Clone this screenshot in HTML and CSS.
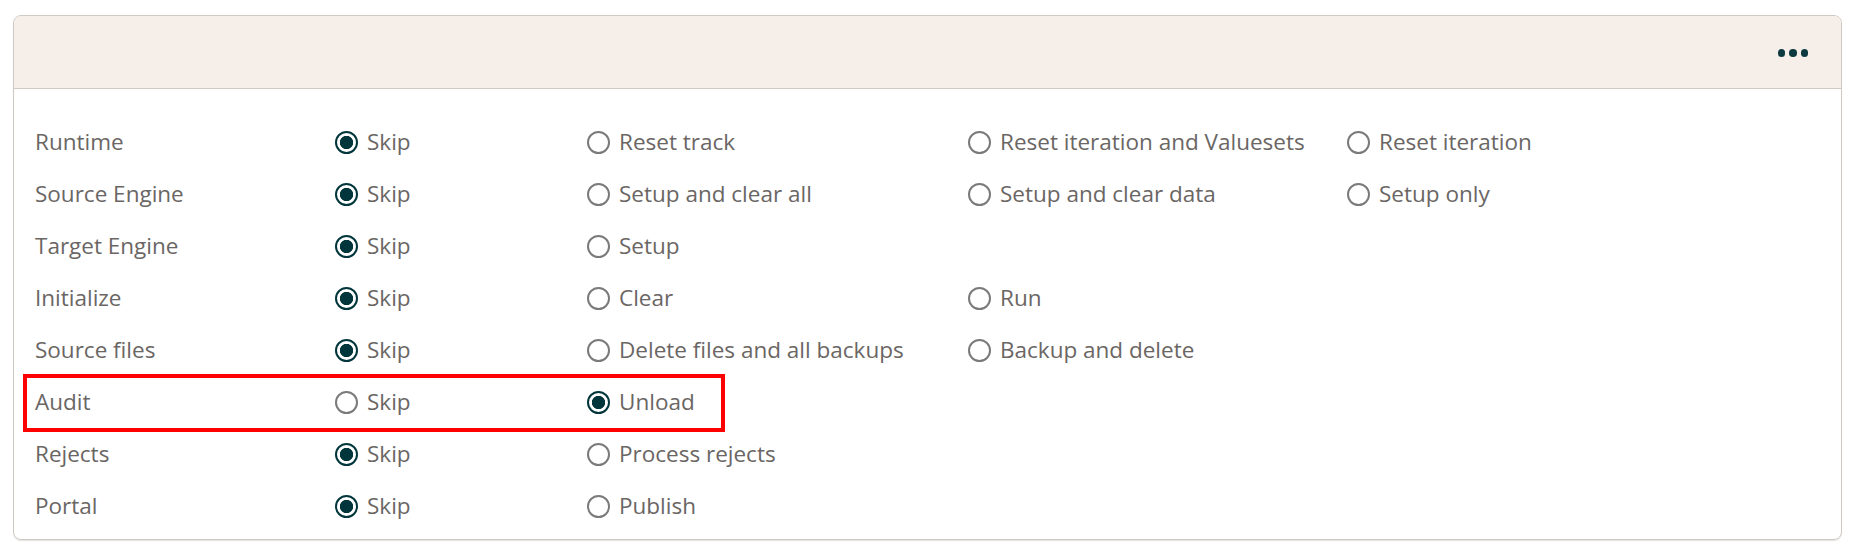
FILE: index.html
```html
<!DOCTYPE html>
<html lang="en">
<head>
<meta charset="utf-8">
<title>Process options</title>
<link rel="stylesheet" href="styles.css">
</head>
<body>
<div class="page">
  <section class="card">
    <header class="card-header">
      <button class="more" aria-label="More options">
        <span class="dot"></span><span class="dot"></span><span class="dot"></span>
      </button>
    </header>
    <div class="card-body">
      <div class="row">
        <span class="name">Runtime</span>
        <label class="opt"><input type="radio" name="runtime" checked><span>Skip</span></label>
        <label class="opt"><input type="radio" name="runtime"><span>Reset track</span></label>
        <label class="opt"><input type="radio" name="runtime"><span>Reset iteration and Valuesets</span></label>
        <label class="opt"><input type="radio" name="runtime"><span>Reset iteration</span></label>
      </div>
      <div class="row">
        <span class="name">Source Engine</span>
        <label class="opt"><input type="radio" name="source" checked><span>Skip</span></label>
        <label class="opt"><input type="radio" name="source"><span>Setup and clear all</span></label>
        <label class="opt"><input type="radio" name="source"><span>Setup and clear data</span></label>
        <label class="opt"><input type="radio" name="source"><span>Setup only</span></label>
      </div>
      <div class="row">
        <span class="name">Target Engine</span>
        <label class="opt"><input type="radio" name="target" checked><span>Skip</span></label>
        <label class="opt"><input type="radio" name="target"><span>Setup</span></label>
      </div>
      <div class="row">
        <span class="name">Initialize</span>
        <label class="opt"><input type="radio" name="init" checked><span>Skip</span></label>
        <label class="opt"><input type="radio" name="init"><span>Clear</span></label>
        <label class="opt"><input type="radio" name="init"><span>Run</span></label>
      </div>
      <div class="row">
        <span class="name">Source files</span>
        <label class="opt"><input type="radio" name="files" checked><span>Skip</span></label>
        <label class="opt"><input type="radio" name="files"><span>Delete files and all backups</span></label>
        <label class="opt"><input type="radio" name="files"><span>Backup and delete</span></label>
      </div>
      <div class="row row-highlight">
        <span class="name">Audit</span>
        <label class="opt"><input type="radio" name="audit"><span>Skip</span></label>
        <label class="opt"><input type="radio" name="audit" checked><span>Unload</span></label>
      </div>
      <div class="row">
        <span class="name">Rejects</span>
        <label class="opt"><input type="radio" name="rejects" checked><span>Skip</span></label>
        <label class="opt"><input type="radio" name="rejects"><span>Process rejects</span></label>
      </div>
      <div class="row">
        <span class="name">Portal</span>
        <label class="opt"><input type="radio" name="portal" checked><span>Skip</span></label>
        <label class="opt"><input type="radio" name="portal"><span>Publish</span></label>
      </div>
    </div>
  </section>
</div>
</body>
</html>
```
FILE: styles.css
```css
* { box-sizing: border-box; }

html, body {
  margin: 0;
  padding: 0;
  background: #ffffff;
}

body {
  font-family: "Open Sans", "Noto Sans", "Liberation Sans", sans-serif;
  font-size: 22.5px;
  color: #6a6664;
}

.page {
  padding: 15px 13px 11px 13px;
}

.card {
  border: 1px solid #cfc9c4;
  border-radius: 8px;
  overflow: hidden;
  box-shadow: 0 1px 1px rgba(0, 0, 0, 0.12);
}

.card-header {
  height: 73px;
  background: #f5eee9;
  border-bottom: 1px solid #cfc9c4;
  display: flex;
  align-items: center;
  justify-content: flex-end;
  padding-right: 33px;
}

.more {
  display: flex;
  align-items: center;
  gap: 4px;
  background: none;
  border: 0;
  padding: 0;
  margin-top: 2px;
  cursor: pointer;
}

.dot {
  width: 7.5px;
  height: 7.5px;
  border-radius: 50%;
  background: #0d3a40;
}

.card-body {
  padding: 27px 20px 7px 21px;
}

.row {
  display: grid;
  grid-template-columns: 300px 252px 381px 379px 1fr;
  align-items: center;
  height: 52px;
}

.row-highlight {
  position: relative;
}

.row-highlight::after {
  content: "";
  position: absolute;
  left: -12px;
  top: -2px;
  width: 694px;
  height: 50px;
  border: 4px solid #ff0000;
  pointer-events: none;
}

.name {
  line-height: 1;
}

.opt {
  display: flex;
  align-items: center;
  gap: 9px;
  line-height: 1;
  white-space: nowrap;
  cursor: pointer;
}

.opt input {
  appearance: none;
  -webkit-appearance: none;
  margin: 0;
  width: 23px;
  height: 23px;
  border-radius: 50%;
  border: 2px solid #7a7a7a;
  background: #ffffff;
  flex: none;
}

.opt input:checked {
  border: 2.5px solid #00363b;
  background: radial-gradient(circle, #00363b 0 6.3px, #ffffff 7px);
}
```
